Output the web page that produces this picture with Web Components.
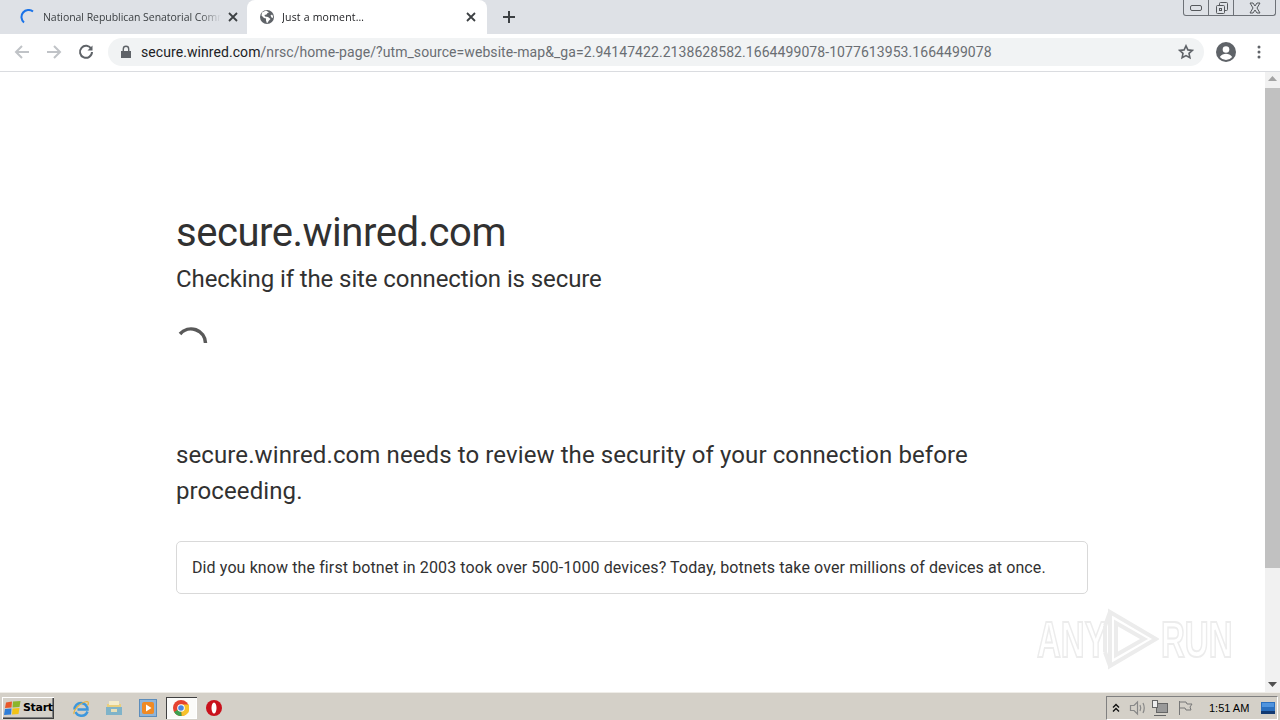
<!DOCTYPE html>
<html>
<head>
<meta charset="utf-8">
<title>Just a moment...</title>
<style>
    html, body {
        margin: 0;
        padding: 0;
        height: 100%;
        overflow: hidden;
        font-family: Roboto, "Liberation Sans", sans-serif;
    }

    body {
        display: flex;
        flex-direction: column;
        width: 1280px;
        height: 720px;
    }
</style>
</head>
<body>
<tab-strip></tab-strip>
<nav-bar></nav-bar>
<page-view>
    <challenge-page host-name="secure.winred.com"></challenge-page>
</page-view>
<win-taskbar></win-taskbar>

<script>
class BrowserTab extends HTMLElement {
    constructor() {
        super();
        this.shadowDOM = this.attachShadow({mode: "open"});
        this.shadowDOM.innerHTML = `
            <style>
                :host {
                    display: flex;
                    align-items: center;
                    box-sizing: border-box;
                    height: 34px;
                    font: 10.5px "Open Sans", "Liberation Sans", sans-serif;
                    letter-spacing: -0.05px;
                    color: #3c4043;
                }

                :host([active]) {
                    background: #fff;
                    border-radius: 8px 8px 0 0;
                    letter-spacing: 0.2px;
                    color: #202124;
                }

                .icon {
                    display: flex;
                    flex: none;
                    width: 16px;
                    height: 16px;
                    margin-right: 7px;
                }

                .title {
                    flex: 1;
                    min-width: 0;
                    margin-right: 7px;
                    overflow: hidden;
                    white-space: nowrap;
                    -webkit-mask-image: linear-gradient(to right, #000 88%, transparent);
                }

                svg.close {
                    flex: none;
                    width: 10px;
                    height: 10px;
                    stroke: #3c4043;
                    stroke-width: 1.8;
                    fill: none;
                }
            </style>
            <span class="icon"><slot name="icon"></slot></span>
            <span class="title"><slot></slot></span>
            <svg class="close" viewBox="0 0 10 10"><path d="M1 1l8 8M9 1l-8 8"/></svg>`;
    }
}

customElements.define("browser-tab", BrowserTab);

class TabStrip extends HTMLElement {
    constructor() {
        super();
        this.shadowDOM = this.attachShadow({mode: "open"});
        this.shadowDOM.innerHTML = `
            <style>
                :host {
                    display: flex;
                    flex: none;
                    align-items: flex-end;
                    height: 34px;
                    background: #dee1e6;
                    padding-left: 20px;
                    box-sizing: border-box;
                }

                .first {
                    width: 218px;
                    margin-right: 9px;
                }

                .second {
                    width: 240px;
                    padding: 0 11px 0 12px;
                }

                .plus {
                    flex: none;
                    width: 12px;
                    height: 12px;
                    margin: 0 0 11px 16px;
                    stroke: #3c4043;
                    stroke-width: 2;
                }

                .controls {
                    display: flex;
                    align-self: flex-start;
                    margin-left: auto;
                    margin-right: 4px;
                    height: 16px;
                    box-sizing: border-box;
                    border: 1px solid #6d7177;
                    border-top: 0;
                    border-radius: 0 0 3px 3px;
                }

                .controls span {
                    display: flex;
                    align-items: center;
                    justify-content: center;
                    height: 15px;
                }

                .controls span + span {
                    border-left: 1px solid #6d7177;
                }

                .controls svg {
                    fill: none;
                    stroke: #55585c;
                }
            </style>
            <browser-tab class="first">
                <svg slot="icon" width="16" height="16" viewBox="0 0 16 16" fill="none" stroke="#1a73e8" stroke-width="2">
                    <path d="M13 2.600A7 7 0 0 0 4 13.400"/>
                </svg>
                National Republican Senatorial Committee
            </browser-tab>
            <browser-tab class="second" active>
                <svg slot="icon" width="16" height="16" viewBox="0 0 16 16">
                    <circle cx="8" cy="8" r="7" fill="#5f6368"/>
                    <path d="M7 1.500 3 3.500l-.5 3L5 9l2 .5v2L8 14.400l2-3 1.500-1.500-2.500-2-3-.5-.5-1.500 2-.5 1-1.500L10 3.500zM13 5.500l-1.500 1 1 2 1.400.5.100-2z" fill="#fff"/>
                </svg>
                Just a moment…
            </browser-tab>
            <svg class="plus" viewBox="0 0 12 12"><path d="M6 0v12M0 6h12"/></svg>
            <div class="controls">
                <span style="width:24px"><svg width="14" height="8" viewBox="0 0 14 8"><rect x="1.500" y="1.500" width="11" height="5" rx="1.500"/></svg></span>
                <span style="width:24px"><svg width="13" height="14" viewBox="0 0 13 14"><rect x="4.500" y="1.500" width="8" height="8" rx="1"/><rect x="1.500" y="4.500" width="8" height="8" rx="1" fill="#dee1e6"/><rect x="4.500" y="7.500" width="2" height="2"/></svg></span>
                <span style="width:41px"><svg width="14" height="12" viewBox="0 0 14 12"><path d="M2 1h3l2 3 2-3h3L9 6l3 5H9L7 8l-2 3H2l3-5z"/></svg></span>
            </div>`;
    }
}

customElements.define("tab-strip", TabStrip);

class NavBar extends HTMLElement {
    constructor() {
        super();
        this.shadowDOM = this.attachShadow({mode: "open"});
        this.shadowDOM.innerHTML = `
            <style>
                :host {
                    display: flex;
                    flex: none;
                    align-items: center;
                    box-sizing: border-box;
                    height: 38px;
                    padding: 0 19px 1px 14px;
                    background: #fff;
                    border-bottom: 1px solid #dadce0;
                }

                .nav {
                    flex: none;
                    width: 16px;
                    height: 16px;
                    margin-right: 16px;
                    fill: none;
                    stroke: #c0c3c7;
                    stroke-width: 2;
                }

                .reload {
                    stroke: #5f6368;
                    margin-right: 14px;
                }

                .omnibox {
                    display: flex;
                    flex: 1;
                    align-items: center;
                    height: 28px;
                    padding: 0 10px 0 12px;
                    border-radius: 14px;
                    background: #f1f3f4;
                    font: 14px Roboto, "Liberation Sans", sans-serif;
                    letter-spacing: 0.07px;
                    color: #6a6e73;
                    white-space: nowrap;
                    overflow: hidden;
                }

                .omnibox b {
                    font-weight: 400;
                    color: #202124;
                }

                .lock {
                    flex: none;
                    width: 12px;
                    height: 14px;
                    margin-right: 9px;
                }

                .url {
                    flex: 1;
                }

                .star {
                    flex: none;
                    width: 16px;
                    height: 16px;
                    fill: none;
                    stroke: #5f6368;
                    stroke-width: 1.6;
                }

                .avatar {
                    flex: none;
                    width: 20px;
                    height: 20px;
                    margin-left: 12px;
                }

                .menu {
                    flex: none;
                    width: 4px;
                    height: 14px;
                    margin-left: 21px;
                    fill: #5f6368;
                }
            </style>
            <svg class="nav" viewBox="0 0 16 16"><path d="M15 8H2M8 2 2 8l6 6"/></svg>
            <svg class="nav" viewBox="0 0 16 16"><path d="M1 8h13M8 2l6 6-6 6"/></svg>
            <svg class="nav reload" viewBox="0 0 16 16"><path d="M13.300 5A6 6 0 1 0 14 8"/><path d="M14.500 1.500v5h-5z" fill="#5f6368" stroke="none"/></svg>
            <div class="omnibox">
                <svg class="lock" viewBox="0 0 12 14"><path d="M1 6h10v7H1z" fill="#5f6368"/><path d="M3.300 6V4a2.700 2.700 0 0 1 5.400 0v2" fill="none" stroke="#5f6368" stroke-width="1.400"/></svg>
                <span class="url"><b>secure.winred.com</b>/nrsc/home-page/?utm_source=website-map&amp;_ga=2.94147422.2138628582.1664499078-1077613953.1664499078</span>
                <svg class="star" viewBox="0 0 16 16"><path d="m8 1.800 1.900 4.100 4.400.5-3.300 3 .9 4.400L8 11.600l-3.900 2.200.9-4.400-3.300-3 4.400-.5z"/></svg>
            </div>
            <svg class="avatar" viewBox="0 0 20 20">
                <circle cx="10" cy="10" r="10" fill="#5f6368"/>
                <circle cx="10" cy="7.500" r="3.300" fill="#fff"/>
                <path d="M3.800 15c1.500-2.400 4-3.200 6.200-3.200s4.700.8 6.200 3.200A8 8 0 0 1 10 18a8 8 0 0 1-6.200-3z" fill="#fff"/>
            </svg>
            <svg class="menu" viewBox="0 0 4 14"><circle cx="2" cy="2" r="1.500"/><circle cx="2" cy="7" r="1.500"/><circle cx="2" cy="12" r="1.500"/></svg>`;
    }
}

customElements.define("nav-bar", NavBar);

class PageView extends HTMLElement {
    constructor() {
        super();
        this.shadowDOM = this.attachShadow({mode: "open"});
        this.shadowDOM.innerHTML = `
            <style>
                :host {
                    display: flex;
                    flex: 1;
                    min-height: 0;
                    position: relative;
                    background: #fff;
                }

                .content {
                    flex: 1;
                    min-width: 0;
                    overflow: hidden;
                }

                .bar {
                    display: flex;
                    flex: none;
                    flex-direction: column;
                    align-items: center;
                    width: 15px;
                    background: #f1f1f1;
                }

                .arrow {
                    flex: none;
                    width: 9px;
                    height: 5px;
                    fill: #a3a3a3;
                    margin: 4px 0 7px;
                }

                .arrow.down {
                    margin: auto 0 5px;
                    fill: #505050;
                }

                .thumb {
                    width: 100%;
                    height: 480px;
                    background: #c1c1c1;
                }

                /* sandbox watermark sits over the page */
                .mark {
                    position: absolute;
                    left: 1037px;
                    top: 536px;
                    display: flex;
                    align-items: center;
                    gap: 2px;
                    pointer-events: none;
                    font: 700 50px/64px "Liberation Sans", sans-serif;
                    color: transparent;
                    -webkit-text-stroke: 2px #ececec;
                }

                .mark span {
                    display: block;
                    width: 64px;
                    transform-origin: left center;
                    transform: scaleX(0.66);
                }

                .mark svg {
                    fill: none;
                    stroke: #ececec;
                    stroke-width: 4;
                }
            </style>
            <div class="content"><slot></slot></div>
            <div class="bar">
                <svg class="arrow" viewBox="0 0 9 5"><path d="M4.500 0 9 5H0z"/></svg>
                <div class="thumb"></div>
                <svg class="arrow down" viewBox="0 0 9 5"><path d="M0 0h9L4.500 5z"/></svg>
            </div>
            <div class="mark">
                <span>ANY</span>
                <svg width="56" height="64" viewBox="0 0 56 64"><path d="M7 4v54l46-27zM13 15v32l28-16z"/><path d="M2 18v26M7 4l-5 14M7 58l-5-14"/></svg>
                <span>RUN</span>
            </div>`;
    }
}

customElements.define("page-view", PageView);

class ChallengePage extends HTMLElement {
    constructor() {
        super();
        this.shadowDOM = this.attachShadow({mode: "open"});
    }

    connectedCallback() {
        const host = this.getAttribute("host-name");
        this.shadowDOM.innerHTML = `
            <style>
                * {
                    margin: 0;
                    padding: 0;
                    box-sizing: border-box;
                }

                :host {
                    display: block;
                    color: #313131;
                    font-family: Roboto, "Liberation Sans", sans-serif;
                }

                .main {
                    width: 960px;
                    margin-left: 152px;
                    padding: 0 24px;
                }

                h1 {
                    padding-top: 137px;
                    font-size: 40px;
                    line-height: 48px;
                    font-weight: 400;
                    letter-spacing: -0.47px;
                }

                h2 {
                    margin-top: 4px;
                    font-size: 24px;
                    line-height: 36px;
                    font-weight: 400;
                    letter-spacing: -0.1px;
                }

                .spinner {
                    display: block;
                    width: 32px;
                    height: 32px;
                    margin-top: 29px;
                    fill: none;
                    stroke: #595959;
                    stroke-width: 3.500;
                }

                p.lead {
                    margin-top: 79px;
                    font-size: 24px;
                    line-height: 36px;
                    letter-spacing: 0.1px;
                }

                .fact {
                    margin-top: 32px;
                    padding: 16px 15px;
                    border: 1px solid #d9d9d9;
                    border-radius: 5px;
                    font-size: 16px;
                    line-height: 19px;
                    letter-spacing: 0.11px;
                }
            </style>
            <div class="main">
                <h1>${host}</h1>
                <h2>Checking if the site connection is secure</h2>
                <svg class="spinner" viewBox="0 0 32 32"><path d="M4 8A14.500 14.500 0 0 1 29.500 17"/></svg>
                <p class="lead">${host} needs to review the security of your connection before proceeding.</p>
                <div class="fact">Did you know the first botnet in 2003 took over 500-1000 devices? Today, botnets take over millions of devices at once.</div>
            </div>`;
    }
}

customElements.define("challenge-page", ChallengePage);

class WinTaskbar extends HTMLElement {
    constructor() {
        super();
        this.shadowDOM = this.attachShadow({mode: "open"});
        this.shadowDOM.innerHTML = `
            <style>
                :host {
                    display: flex;
                    flex: none;
                    align-items: center;
                    box-sizing: border-box;
                    height: 28px;
                    padding: 2px 2px 0 2px;
                    background: #d4d0c8;
                    border-top: 1px solid #efede8;
                    font: 11px "Liberation Sans", sans-serif;
                    color: #000;
                }

                .start {
                    display: flex;
                    flex: none;
                    align-items: center;
                    gap: 1px;
                    box-sizing: border-box;
                    width: 52px;
                    height: 22px;
                    padding-left: 2px;
                    font: 700 11px "DejaVu Sans", sans-serif;
                    letter-spacing: -0.3px;
                    background: #d4d0c8;
                    box-shadow: inset 1px 1px 0 #fff, inset -1px -1px 0 #404040, inset -2px -2px 0 #808080;
                }

                .apps {
                    display: flex;
                    flex: none;
                    align-items: center;
                    margin-left: 10px;
                }

                .apps span {
                    display: flex;
                    align-items: center;
                    justify-content: center;
                    width: 33.500px;
                    height: 22px;
                }

                .apps .current {
                    box-sizing: border-box;
                    width: 31px;
                    margin: 0 1px;
                    background: #fbfbf9;
                    box-shadow: inset 1px 1px 0 #404040, inset -1px -1px 0 #fff;
                }

                .tray {
                    display: flex;
                    flex: none;
                    align-items: center;
                    box-sizing: border-box;
                    height: 24px;
                    width: 172px;
                    margin-left: auto;
                    padding-left: 5px;
                    border: 1px solid;
                    border-color: #808080 #fff #fff #808080;
                }

                .tray svg {
                    flex: none;
                }

                .clock {
                    flex: none;
                    margin-left: 15px;
                    width: 52px;
                    white-space: nowrap;
                }
            </style>
            <div class="start">
                <svg width="18" height="16" viewBox="0 0 18 16">
                    <path d="M2 2.500 8 1.500 7.500 7.500 1 8z" fill="#e8582a"/>
                    <path d="M9 1.500 16.500 1 15.500 7 8.500 7.500z" fill="#8bb52c"/>
                    <path d="M1 9l6.500-.5-.5 6-7 .5z" fill="#2f7ed8"/>
                    <path d="M8.500 8.500l7-.5-1 6-6.500.5z" fill="#f2c316"/>
                </svg>
                Start
            </div>
            <div class="apps">
                <span>
                    <svg width="18" height="18" viewBox="0 0 18 18" fill="none">
                        <path d="M2.500 10.500a6.500 6.500 0 0 1 13 0H5.500M15.500 12.500A6.500 6.500 0 0 1 3.500 13" stroke="#3d97dd" stroke-width="2.500"/>
                        <path d="M2 15C1 11 9 3 15 2.500c2 0 1.500 2.500.5 4" stroke="#e8b339" stroke-width="1.200"/>
                    </svg>
                </span>
                <span>
                    <svg width="18" height="16" viewBox="0 0 18 16">
                        <path d="M2 4h14v11H2z" fill="#e9cf7d"/>
                        <path d="M4 1h10v4H4z" fill="#f4eccb"/>
                        <path d="M1 7h16v8H1z" fill="#7fb3c9"/>
                        <path d="M6 9h6v3H6z" fill="#e7dfb8"/>
                    </svg>
                </span>
                <span>
                    <svg width="18" height="18" viewBox="0 0 18 18">
                        <rect x="0.500" y="0.500" width="17" height="17" fill="#8fb4d8" stroke="#5d8dbb"/>
                        <rect x="3" y="3" width="12" height="12" rx="2" fill="#f08a24"/>
                        <path d="M7 5.500 12.500 9 7 12.500z" fill="#fff"/>
                    </svg>
                </span>
                <span class="current">
                    <svg width="16" height="16" viewBox="0 0 16 16">
                        <circle cx="8" cy="8" r="8" fill="#e5432f"/>
                        <path d="M8 8 1.100 12A8 8 0 0 0 8.800 16z" fill="#3da14f"/>
                        <path d="M8 8 8.800 16A8 8 0 0 0 15.800 4.500H8z" fill="#f7c22a"/>
                        <circle cx="8" cy="8" r="3.800" fill="#fff"/>
                        <circle cx="8" cy="8" r="2.800" fill="#4a86e0"/>
                    </svg>
                </span>
                <span>
                    <svg width="16" height="16" viewBox="0 0 16 16">
                        <circle cx="8" cy="8" r="8" fill="#c9111c"/>
                        <ellipse cx="8" cy="8" rx="2.500" ry="5.500" fill="#fff"/>
                    </svg>
                </span>
            </div>
            <div class="tray">
                <svg width="8" height="10" viewBox="0 0 8 10" fill="none" stroke="#111" stroke-width="1.400"><path d="M1 4.500 4 1.500l3 3M1 8.500l3-3 3 3"/></svg>
                <svg style="margin-left:9px" width="18" height="16" viewBox="0 0 18 16" fill="none" stroke="#888" stroke-width="1.200"><path d="M1.500 5.500H5L8.500 2v12L5 10.500H1.500zM11 5q1.500 3 0 6M14 3q2.500 5 0 10"/></svg>
                <svg style="margin-left:4px" width="18" height="16" viewBox="0 0 18 16" fill="none" stroke="#666"><rect x="5.500" y="3.500" width="11" height="9" fill="#999"/><rect x="1.500" y="0.500" width="5" height="7" fill="#eee"/><path d="M3 15.500h12"/></svg>
                <svg style="margin-left:9px" width="16" height="16" viewBox="0 0 16 16" fill="none" stroke="#777"><path d="M1.500 1v14M2 2h6l1 2h5l-2 3 1 3H8L7 8H2"/></svg>
                <span class="clock">1:51 AM</span>
                <svg width="14" height="12" viewBox="0 0 14 12"><rect width="14" height="12" fill="#2a6fbe"/><rect y="9" width="14" height="3" fill="#123a72"/><rect x="1" y="1" width="12" height="4" fill="#4f94de"/></svg>
            </div>`;
    }
}

customElements.define("win-taskbar", WinTaskbar);
</script>
</body>
</html>
